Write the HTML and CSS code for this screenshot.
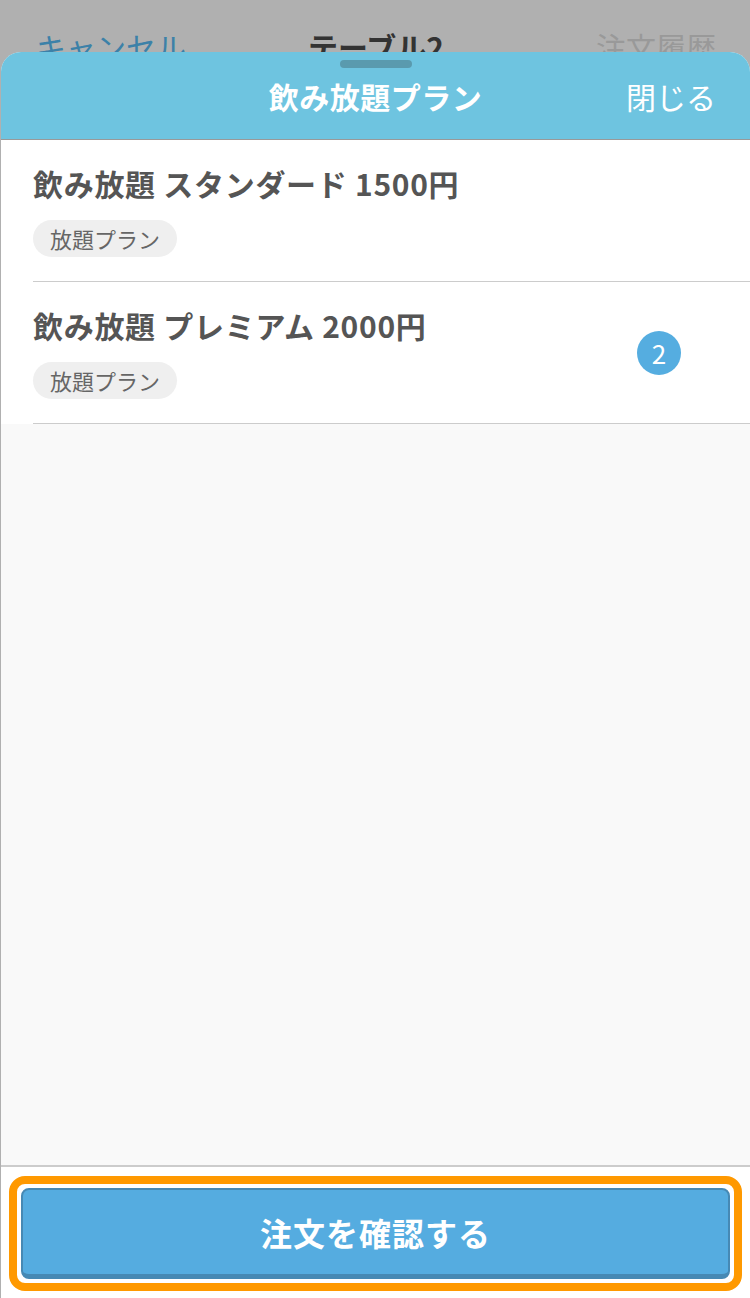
FILE: index.html
```html
<!DOCTYPE html>
<html lang="ja">
<head>
<meta charset="utf-8">
<link rel="stylesheet" href="styles.css">
</head>
<body>
<div class="screen">
  <div class="backnav">
    <span class="nav-cancel">キャンセル</span>
    <span class="nav-title">テーブル2</span>
    <span class="nav-history">注文履歴</span>
  </div>
  <div class="sheet">
    <div class="sheet-header">
      <div class="handle"></div>
      <div class="spacer"></div>
      <div class="sheet-title">飲み放題プラン</div>
      <div class="sheet-close">閉じる</div>
    </div>
    <div class="list">
      <div class="item">
        <div class="item-main">
          <div class="item-name">飲み放題 スタンダード 1500円</div>
          <span class="tag">放題プラン</span>
        </div>
      </div>
      <div class="item">
        <div class="item-main">
          <div class="item-name">飲み放題 プレミアム 2000円</div>
          <span class="tag">放題プラン</span>
        </div>
        <div class="badge">2</div>
      </div>
    </div>
    <div class="filler"></div>
    <div class="footer">
      <div class="highlight">
        <div class="confirm-btn">注文を確認する</div>
      </div>
    </div>
  </div>
</div>
</body>
</html>
```
FILE: styles.css
```css
* { box-sizing: border-box; }
html, body {
  margin: 0;
  padding: 0;
}
body {
  font-family: "Noto Sans CJK JP", "Noto Sans", sans-serif;
  background: #b0b0b0;
}
.screen {
  width: 750px;
  height: 1298px;
  display: flex;
  flex-direction: column;
  overflow: hidden;
  background: #b0b0b0;
}
.backnav {
  height: 52px;
  flex: none;
  overflow: hidden;
  display: grid;
  grid-template-columns: 1fr auto 1fr;
  align-items: start;
  padding: 26px 34px 0 36px;
  font-size: 30px;
  line-height: 40px;
}
.nav-cancel { color: #3c81a8; }
.nav-title { color: #333; font-weight: 700; }
.nav-history { color: #999; justify-self: end; }
.sheet {
  flex: 1;
  margin-left: 1px;
  display: flex;
  flex-direction: column;
  border-radius: 20px 20px 0 0;
  overflow: hidden;
  background: #f9f9f9;
}
.sheet-header {
  position: relative;
  height: 88px;
  flex: none;
  background: #6ec4e0;
  border-bottom: 1px solid #999;
  display: grid;
  grid-template-columns: 1fr auto 1fr;
  align-items: center;
  color: #fff;
  font-size: 30px;
}
.handle {
  position: absolute;
  top: 8px;
  left: calc(50% - 36px);
  width: 72px;
  height: 8px;
  border-radius: 4px;
  background: #5a9aae;
}
.sheet-title {
  font-weight: 700;
  letter-spacing: 0.5px;
}
.sheet-close {
  justify-self: end;
  padding-right: 34px;
}
.list {
  background: #fff;
  flex: none;
}
.item {
  margin-left: 32px;
  height: 142px;
  border-bottom: 1px solid #cccccc;
  display: flex;
  align-items: center;
  padding-right: 69px;
}
.item-main {
  flex: 1;
  display: flex;
  flex-direction: column;
  align-items: flex-start;
  gap: 17px;
  padding-bottom: 2px;
}
.item-name {
  font-size: 30px;
  line-height: 40px;
  font-weight: 700;
  color: #555;
  letter-spacing: 0.7px;
}
.tag {
  height: 37px;
  line-height: 37px;
  padding: 0 17px;
  border-radius: 19px;
  background: #efefef;
  color: #666;
  font-size: 22px;
}
.badge {
  width: 44px;
  height: 44px;
  border-radius: 50%;
  background: #55ade0;
  color: #fff;
  font-size: 26px;
  display: flex;
  align-items: center;
  justify-content: center;
}
.filler {
  flex: 1;
  background: #f9f9f9;
}
.footer {
  flex: none;
  background: #fff;
  border-top: 2px solid #cccccc;
  padding: 9px 8px 7px 8px;
}
.highlight {
  border: 8px solid #ff9900;
  border-radius: 16px;
  padding: 4px;
  background: #fff;
}
.confirm-btn {
  height: 91px;
  background: #55ace0;
  border: 2px solid #4689b4;
  border-bottom-width: 5px;
  border-radius: 8px;
  color: #fff;
  font-size: 32px;
  font-weight: 700;
  display: flex;
  align-items: center;
  justify-content: center;
  letter-spacing: 1px;
}
```
